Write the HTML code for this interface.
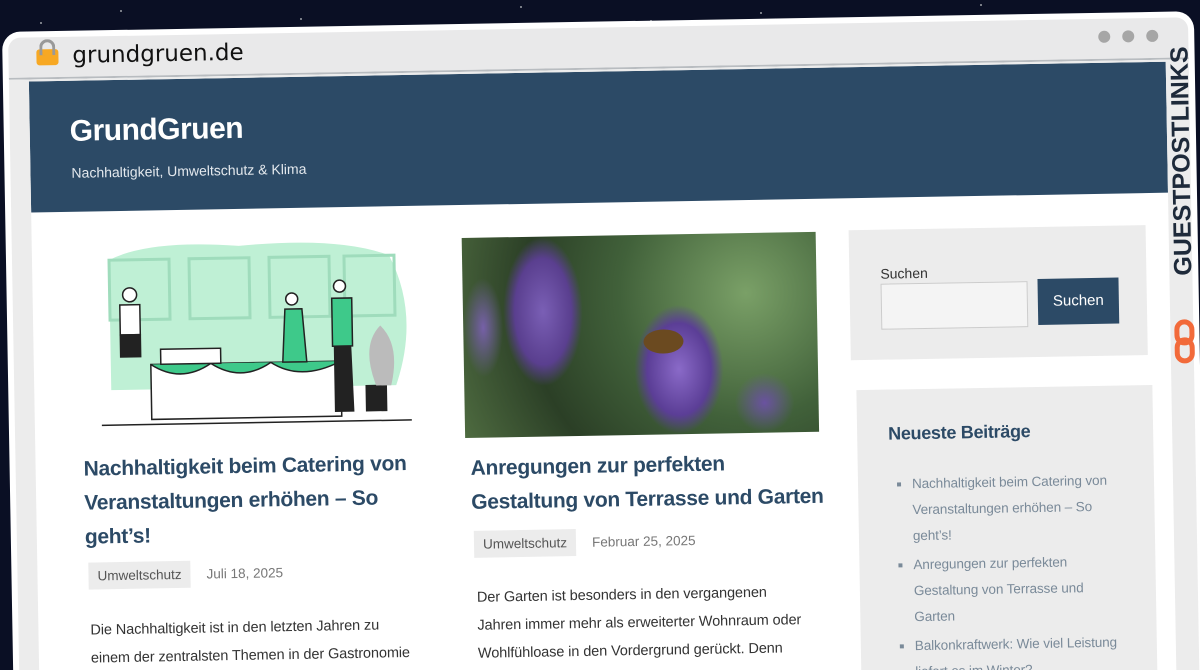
<!DOCTYPE html>
<html><head><meta charset="utf-8"><style>
*{margin:0;padding:0;box-sizing:border-box}
html,body{width:1200px;height:670px;overflow:hidden}
body{background:#0a0f24;font-family:"Liberation Sans",sans-serif;position:relative}
.star{position:absolute;width:2px;height:2px;background:#fff;border-radius:50%;opacity:.6}
#f{position:absolute;left:2px;top:32px;width:1192px;height:700px;transform-origin:0 0;transform:rotate(-1deg);background:#fff;border-radius:18px;overflow:hidden}
.bar{position:absolute;left:6px;top:6px;right:6px;height:42px;background:#e9e9ea;border-radius:12px 12px 0 0;border-bottom:2px solid #b8bcc0}
.inner{position:absolute;left:6px;top:48px;right:6px;bottom:0;background:#ececec}
.page{position:absolute;left:26px;top:50px;width:1137px;bottom:0;background:#fff;overflow:hidden}
.hdr{position:absolute;left:0;top:0;width:100%;height:131px;background:#2c4a66;color:#fff}
.abs{position:absolute}
h2{font-size:21px;line-height:34px;color:#2c4a66;font-weight:bold;letter-spacing:-.3px;white-space:nowrap}
.tag{background:#ececec;color:#555;font-size:13.5px;padding:6px 9px;display:inline-block}
.date{color:#777;font-size:13.5px}
p.t{font-size:14.5px;line-height:28px;color:#333;letter-spacing:-.1px}
.box{background:#ececec}
li{font-size:13.5px;line-height:26px;color:#7a8a99;margin-bottom:3px;letter-spacing:-.1px}
</style></head><body>
<div class="star" style="left:120px;top:10px"></div><div class="star" style="left:300px;top:18px"></div><div class="star" style="left:520px;top:6px"></div><div class="star" style="left:760px;top:12px"></div><div class="star" style="left:980px;top:4px"></div><div class="star" style="left:40px;top:22px"></div><div class="star" style="left:650px;top:20px"></div>
<div id="f">
 <div class="bar">
  <div class="abs" style="left:28px;top:12px;width:22px;height:16px;background:#f7a823;border-radius:3px"></div>
  <div class="abs" style="left:31px;top:2px;width:16px;height:16px;border:3px solid #999;border-bottom:none;border-radius:8px 8px 0 0"></div>
  <div class="abs" style="left:64px;top:6px;font-size:23px;color:#111;font-family:'DejaVu Sans',sans-serif">grundgruen.de</div>
  <div class="abs" style="left:1090px;top:12px;width:12px;height:12px;border-radius:50%;background:#a6a6a6"></div>
  <div class="abs" style="left:1114px;top:12px;width:12px;height:12px;border-radius:50%;background:#a6a6a6"></div>
  <div class="abs" style="left:1138px;top:12px;width:12px;height:12px;border-radius:50%;background:#a6a6a6"></div>
 </div>
 <div class="inner"></div>
 <div class="page">
  <div class="hdr">
   <div class="abs" style="left:40px;top:34px;font-size:30px;font-weight:bold;letter-spacing:-.5px">GrundGruen</div>
   <div class="abs" style="left:41px;top:84px;font-size:14px;color:#e4e9ee">Nachhaltigkeit, Umweltschutz &amp; Klima</div>
  </div>
  <div class="abs" style="left:57px;top:160px;width:325px;height:192px;overflow:hidden">
   <svg width="325" height="192" viewBox="0 0 325 192">
    <path d="M20 20 Q60 0 150 8 Q250 0 300 20 Q330 80 305 150 L20 150 Z" fill="#bff0d5"/>
    <g fill="none" stroke="#9fdcbc" stroke-width="3"><rect x="20" y="20" width="60" height="60"/><rect x="100" y="20" width="60" height="60"/><rect x="180" y="20" width="60" height="60"/><rect x="255" y="20" width="50" height="60"/></g>
    <g stroke="#222" stroke-width="1.5" fill="#fff"><circle cx="40" cy="55" r="7"/><rect x="30" y="65" width="20" height="30"/><rect x="30" y="95" width="20" height="22" fill="#222"/>
    <path d="M60 125 L250 125 L250 180 L60 180 Z"/><path d="M60 125 Q90 145 120 125 Q150 145 180 125 Q210 145 250 125" fill="#3ec98a"/>
    <rect x="70" y="110" width="60" height="15"/><circle cx="202" cy="62" r="6"/><path d="M195 72 L212 72 L216 125 L192 125 Z" fill="#3ec98a"/>
    <circle cx="250" cy="50" r="6"/><path d="M242 62 L262 62 L262 110 L242 110 Z" fill="#3ec98a"/><path d="M244 110 L260 110 L262 175 L244 175Z" fill="#222"/>
    <rect x="275" y="150" width="20" height="25" fill="#222"/></g>
    <path d="M285 150 Q270 110 290 90 Q310 110 300 150" fill="#bbb"/>
    <line x1="10" y1="185" x2="320" y2="185" stroke="#222" stroke-width="1.5"/>
   </svg>
  </div>
  <h2 class="abs" style="left:48px;top:372px">Nachhaltigkeit beim Catering von<br>Veranstaltungen erhöhen – So<br>geht’s!</h2>
  <div class="abs" style="left:51px;top:482px"><span class="tag">Umweltschutz</span><span class="date" style="margin-left:16px">Juli 18, 2025</span></div>
  <p class="t abs" style="left:52px;top:536px;width:325px">Die Nachhaltigkeit ist in den letzten Jahren zu einem der zentralsten Themen in der Gastronomie</p>
  <div class="abs" style="left:430px;top:164px;width:354px;height:200px;overflow:hidden;background:radial-gradient(circle at 80% 30%,#7aa067,#41613a 40%,#2b3f26 70%,#4e6b40)">
   <div class="abs" style="left:40px;top:0;width:80px;height:150px;background:radial-gradient(ellipse,#7a5fb5,#5a3f8f 50%,transparent 70%)"></div>
   <div class="abs" style="left:170px;top:70px;width:90px;height:130px;background:radial-gradient(ellipse,#8a6ac8,#5b3e96 50%,transparent 70%)"></div>
   <div class="abs" style="left:0;top:40px;width:40px;height:100px;background:radial-gradient(ellipse,#7660a8,transparent 70%)"></div>
   <div class="abs" style="left:270px;top:140px;width:60px;height:60px;background:radial-gradient(ellipse,#6a52a0,transparent 70%)"></div>
   <div class="abs" style="left:180px;top:95px;width:40px;height:24px;border-radius:50%;background:#6b4a20"></div>
  </div>
  <h2 class="abs" style="left:435px;top:378px">Anregungen zur perfekten<br>Gestaltung von Terrasse und Garten</h2>
  <div class="abs" style="left:437px;top:457px"><span class="tag">Umweltschutz</span><span class="date" style="margin-left:16px">Februar 25, 2025</span></div>
  <p class="t abs" style="left:439px;top:510px;width:345px">Der Garten ist besonders in den vergangenen<br>Jahren immer mehr als erweiterter Wohnraum oder Wohlfühloase in den Vordergrund gerückt. Denn</p>
  <div class="box abs" style="left:817px;top:163px;width:297px;height:130px">
   <div class="abs" style="left:31px;top:36px;font-size:14px;color:#333">Suchen</div>
   <div class="abs" style="left:31px;top:54px;width:147px;height:46px;background:#f4f4f4;border:1px solid #ccc"></div>
   <div class="abs" style="left:188px;top:52px;width:81px;height:46px;background:#2c4a66;color:#fff;font-size:15px;text-align:center;line-height:46px">Suchen</div>
  </div>
  <div class="box abs" style="left:822px;top:323px;width:296px;height:400px">
   <div class="abs" style="left:31px;top:34px;font-size:18px;font-weight:bold;color:#2c4a66;letter-spacing:-.3px">Neueste Beiträge</div>
   <ul class="abs" style="left:54px;top:82px;width:205px;list-style:square;color:#2c4a66">
    <li>Nachhaltigkeit beim Catering von Veranstaltungen erhöhen – So geht’s!</li>
    <li>Anregungen zur perfekten Gestaltung von Terrasse und Garten</li>
    <li>Balkonkraftwerk: Wie viel Leistung liefert es im Winter?</li>
   </ul>
  </div>
 </div>
 <div class="abs" style="left:1162px;top:50px;width:30px;height:300px">
  <div class="abs" style="left:-135px;top:120px;width:300px;height:30px;transform:rotate(-90deg);font-size:25px;font-weight:900;color:#1e2a3a;white-space:nowrap;text-align:right;line-height:30px">GUESTPOSTLINKS</div>
  <div class="abs" style="left:5px;top:258px;width:20px;height:26px;border:5px solid #f26a3a;border-radius:10px"></div>
  <div class="abs" style="left:5px;top:276px;width:20px;height:26px;border:5px solid #f26a3a;border-radius:10px"></div>
 </div>
</div>
</body></html>
